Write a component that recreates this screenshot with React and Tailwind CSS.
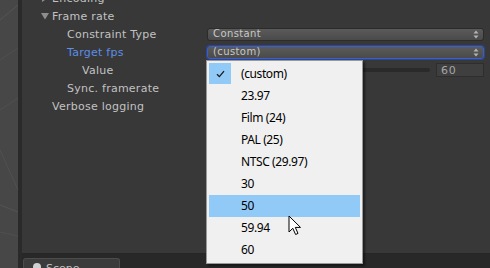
import React from "react";

const menuItems = [
  "(custom)",
  "23.97",
  "Film (24)",
  "PAL (25)",
  "NTSC (29.97)",
  "30",
  "50",
  "59.94",
  "60",
];

function Arrows() {
  return (
    <svg width="6" height="9" viewBox="0 0 6 9" className="shrink-0">
      <polygon points="3,0.5 5.5,3.5 0.5,3.5" fill="#b4b4b4" />
      <polygon points="3,8.5 5.5,5.5 0.5,5.5" fill="#b4b4b4" />
    </svg>
  );
}

function Popup({ value, focused }) {
  return (
    <div
      className={
        "flex items-center justify-between h-[13px] rounded-[3px] pl-[5px] pr-[4px] border bg-gradient-to-b from-[#5b5b5b] to-[#4a4a4a] text-[10px] leading-none text-[#c8c8c8] " +
        (focused ? "border-[#3c5fc2] shadow-[0_0_0_1px_#2d4590]" : "border-[#2c2c2c]")
      }
      style={{ fontFamily: '"DejaVu Sans", sans-serif' }}
    >
      <span className="tracking-[0.4px]">{value}</span>
      <Arrows />
    </div>
  );
}

function Triangle({ open }) {
  return (
    <svg width="8" height="8" viewBox="0 0 8 8" className="mr-[3px] shrink-0">
      {open ? (
        <polygon points="0,1 8,1 4,7.5" fill="#8e8e8e" />
      ) : (
        <polygon points="1,0 7,4 1,8" fill="#8e8e8e" />
      )}
    </svg>
  );
}

function Row({ indent, label, blue, arrow, children }) {
  return (
    <div className="flex items-center h-[18px]">
      <div className="w-[185px] flex items-center" style={{ paddingLeft: indent }}>
        {arrow}
        <span className={"tracking-[0.25px] " + (blue ? "text-[#5d8ee8]" : "text-[#c2c2c2]")}>
          {label}
        </span>
      </div>
      <div className="flex-1 mr-[6px]">{children}</div>
    </div>
  );
}

function SceneLines() {
  return (
    <svg width="18" height="268" viewBox="0 0 18 268" className="block">
      <line x1="0" y1="20" x2="18" y2="5" stroke="#545454" strokeWidth="1" />
      <line x1="0" y1="60" x2="18" y2="48" stroke="#505050" strokeWidth="1" />
      <line x1="0" y1="110" x2="18" y2="98" stroke="#515151" strokeWidth="1" />
      <line x1="0" y1="150" x2="18" y2="190" stroke="#515151" strokeWidth="1" />
      <line x1="0" y1="205" x2="18" y2="212" stroke="#545454" strokeWidth="1" />
      <line x1="0" y1="232" x2="18" y2="236" stroke="#505050" strokeWidth="1" />
    </svg>
  );
}

export default function App() {
  return (
    <div
      className="relative w-[490px] h-[268px] overflow-hidden flex bg-[#282828] text-[11px] leading-none"
      style={{ fontFamily: '"DejaVu Sans", sans-serif' }}
    >
      <div className="w-[18px] h-full bg-[#474747]">
        <SceneLines />
      </div>
      <div className="w-[4px] h-full bg-[#2a2a2a]" />

      <div className="flex-1 flex flex-col">
        <div className="h-[257px] bg-[#383838] border-b border-[#262626]">
          <div className="-mt-[11px]">
            <Row indent={19} label="Encoding" arrow={<Triangle />} />
            <Row indent={19} label="Frame rate" arrow={<Triangle open />} />
            <Row indent={45} label="Constraint Type">
              <Popup value="Constant" />
            </Row>
            <Row indent={45} label="Target fps" blue>
              <Popup value="(custom)" focused />
            </Row>
            <Row indent={60} label="Value">
              <div className="flex items-center">
                <div className="flex-1 h-[4px] rounded-full bg-[#2a2a2a] mr-[6px]" />
                <div className="w-[48px] h-[14px] border border-[#2e2e2e] bg-[#3f3f3f] text-[#a6a6a6] text-[11px] pl-[4px] flex items-center tracking-[0.8px]">
                  60
                </div>
              </div>
            </Row>
            <Row indent={45} label="Sync. framerate" />
            <Row indent={30} label="Verbose logging" />
          </div>
        </div>
        <div className="flex-1 pl-[1px] pt-[4px]">
          <div className="w-[97px] h-[10px] rounded-t-[3px] bg-[#3b3b3b] border-t border-x border-[#4c4c4c] flex items-start pl-[9px] pt-[4px]">
            <div className="w-[8px] h-[8px] rounded-full bg-[#d0d0d0]" />
            <span className="ml-[5px] text-[#c4c4c4] text-[11px]">Scene</span>
          </div>
        </div>
      </div>

      <div
        className="absolute left-[206px] top-[60px] w-[157px] h-[204px] bg-[#f0f0f0] border border-[#999999] shadow-[2px_2px_2px_rgba(0,0,0,0.45)] pt-[2px] px-[2px]"
        style={{ fontFamily: '"Noto Sans", sans-serif' }}
      >
        {menuItems.map((item, i) => (
          <div
            key={item}
            className={
              "relative flex items-center h-[22px] pl-[32px] text-[12px] tracking-[-0.4px] text-black " +
              (item === "50" ? "bg-[#91c9f7]" : "")
            }
          >
            {i === 0 && (
              <div className="absolute left-0 top-0 w-[22px] h-[21px] bg-[#91c9f7] flex items-center justify-center">
                <svg width="9" height="8" viewBox="0 0 9 8">
                  <path d="M1 4.2 L3.4 6.6 L8 1.2" fill="none" stroke="#1a1a1a" strokeWidth="1.3" />
                </svg>
              </div>
            )}
            {item}
          </div>
        ))}
      </div>

      <svg
        width="14"
        height="21"
        viewBox="0 0 14 21"
        className="absolute left-[288px] top-[215px]"
      >
        <path
          d="M1 1 L1 17 L4.8 13.3 L7.6 19.5 L10 18.4 L7.3 12.4 L12.5 12.4 Z"
          fill="#ffffff"
          stroke="#000000"
          strokeWidth="1"
          strokeLinejoin="round"
        />
      </svg>
    </div>
  );
}
